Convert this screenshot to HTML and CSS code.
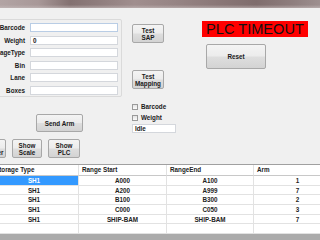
FILE: index.html
```html
<!DOCTYPE html>
<html>
<head>
<meta charset="utf-8">
<link rel="stylesheet" href="styles.css">
</head>
<body>
<div class="titlebar"></div>
<div class="form">
  <div class="top">
    <div class="col-left">
      <div class="groupbox">
        <label class="lbl">Barcode</label><div class="tb focus"></div>
        <label class="lbl">Weight</label><div class="tb">0</div>
        <label class="lbl">StorageType</label><div class="tb"></div>
        <label class="lbl">Bin</label><div class="tb"></div>
        <label class="lbl">Lane</label><div class="tb"></div>
        <label class="lbl">Boxes</label><div class="tb"></div>
      </div>
      <button class="btn send">Send Arm</button>
      <div class="btnrow">
        <button class="btn b1">Show<br>Scanner</button>
        <button class="btn b2">Show<br>Scale</button>
        <button class="btn b3">Show<br>PLC</button>
      </div>
    </div>
    <div class="col-mid">
      <button class="btn test1">Test<br>SAP</button>
      <button class="btn test2">Test<br>Mapping</button>
      <div class="chk"><span class="box"></span>Barcode</div>
      <div class="chk"><span class="box"></span>Weight</div>
      <div class="tb idle">Idle</div>
    </div>
    <div class="col-right">
      <div class="plc">PLC TIMEOUT</div>
      <button class="btn reset">Reset</button>
    </div>
  </div>
  <div class="grid">
    <div class="hd">Storage Type</div><div class="hd">Range Start</div><div class="hd">RangeEnd</div><div class="hd">Arm</div>
    <div class="c sel">SH1</div><div class="c">A000</div><div class="c">A100</div><div class="c">1</div>
    <div class="c">SH1</div><div class="c">A200</div><div class="c">A999</div><div class="c">7</div>
    <div class="c">SH1</div><div class="c">B100</div><div class="c">B300</div><div class="c">2</div>
    <div class="c">SH1</div><div class="c">C000</div><div class="c">C050</div><div class="c">3</div>
    <div class="c">SH1</div><div class="c">SHIP-BAM</div><div class="c">SHIP-BAM</div><div class="c">7</div>
    <div class="c"></div><div class="c"></div><div class="c"></div><div class="c"></div>
  </div>
  <div class="empty"></div>
</div>
</body>
</html>
```
FILE: styles.css
```css
html, body {
  margin: 0;
  padding: 0;
  width: 320px;
  height: 240px;
  overflow: hidden;
  background: #f0f0f0;
  font-family: "Liberation Sans", Arial, sans-serif;
  font-size: 6.3px;
  font-weight: bold;
  color: #1a1a1a;
}
.titlebar {
  height: 8px;
  background:
    linear-gradient(to bottom, rgba(240,240,240,0) 60%, rgba(200,190,190,0.6) 100%),
    linear-gradient(to right, #b2a4a4 0%, #a89898 12%, #837171 22%, #8e7c7c 30%, #a08e8e 42%, #968484 55%, #8a7777 68%, #7f6d6d 80%, #8f7f7f 92%, #9d8f8f 100%);
}
.form {
  display: flex;
  flex-direction: column;
  height: 232px;
}
.top {
  display: flex;
  height: 153px;
}
.col-left {
  width: 132px;
  margin-left: -10px;
  display: flex;
  flex-direction: column;
}
.groupbox {
  margin-top: 11px;
  height: 78px;
  box-sizing: border-box;
  border: 1px solid #dadada;
  border-radius: 2px;
  padding-top: 3px;
  display: grid;
  grid-template-columns: 34px 88px;
  column-gap: 5px;
  grid-auto-rows: 9px;
  row-gap: 3.6px;
  align-items: center;
}
.lbl {
  text-align: right;
  white-space: nowrap;
  overflow: visible;
  direction: rtl;
}
.tb {
  height: 9px;
  box-sizing: border-box;
  background: #fff;
  border: 1px solid #d4d7dc;
  font-size: 6.3px;
  line-height: 7px;
  padding-left: 2px;
}
.tb.focus {
  border-color: #b9cde5;
}
.btn {
  box-sizing: border-box;
  margin: 0;
  padding: 0;
  font-family: inherit;
  font-size: 6.3px;
  font-weight: bold;
  line-height: 7px;
  color: #1a1a1a;
  border: 1px solid #a8a8a8;
  border-radius: 2px;
  background: linear-gradient(to bottom, #f4f4f4 0%, #ececec 48%, #dedede 52%, #d3d3d3 100%);
  text-align: center;
  white-space: nowrap;
  overflow: hidden;
}
.send {
  margin-top: 17px;
  margin-left: 46px;
  width: 47px;
  height: 18px;
}
.btnrow {
  margin-top: 7px;
  display: flex;
  gap: 6px;
  height: 19px;
}
.b1 { margin-left: -14px; width: 30px; }
.b2 { width: 30px; }
.b3 { width: 32px; }
.col-mid {
  margin-left: 10px;
  width: 44px;
  display: flex;
  flex-direction: column;
}
.test1 {
  margin-top: 16px;
  width: 32px;
  height: 19px;
}
.test2 {
  margin-top: 27px;
  width: 32px;
  height: 19px;
}
.chk {
  height: 11px;
  display: flex;
  align-items: center;
  gap: 3px;
  white-space: nowrap;
}
.chk:first-of-type { margin-top: 12px; }
.box {
  width: 6px;
  height: 6px;
  box-sizing: border-box;
  border: 1px solid #9a9a9a;
  background: linear-gradient(#e4e4e4, #fafafa);
}
.idle {
  margin-top: 1px;
  width: 44px;
}
.col-right {
  margin-left: 26px;
  display: flex;
  flex-direction: column;
}
.plc {
  margin-top: 13px;
  width: 106px;
  height: 16px;
  background: #ff0000;
  color: #111;
  font-weight: normal;
  font-size: 14.6px;
  line-height: 16px;
  text-align: center;
}
.reset {
  margin-top: 7px;
  margin-left: 4px;
  width: 60px;
  height: 25px;
}
.grid {
  margin-top: 3px;
  margin-left: -10px;
  width: 352px;
  display: grid;
  grid-template-columns: 89px 88px 87px 88px;
  grid-template-rows: 11px repeat(6, 9.7px);
  background: #fff;
  border-top: 1px solid #a0a0a0;
}
.hd {
  padding-left: 3px;
  line-height: 10px;
  border-bottom: 1px solid #c8c8c8;
  border-right: 1px solid #e2e2e2;
  font-weight: bold;
  white-space: nowrap;
  color: #222;
}
.hd:first-child { padding-left: 5px; }
.c {
  text-align: center;
  line-height: 9px;
  border-bottom: 1px solid #e2e2e2;
  border-right: 1px solid #e2e2e2;
  color: #222;
}
.c.sel {
  background: #3399ff;
  color: #fff;
}
.empty {
  flex: 1;
  background: #ababab;
}
```
